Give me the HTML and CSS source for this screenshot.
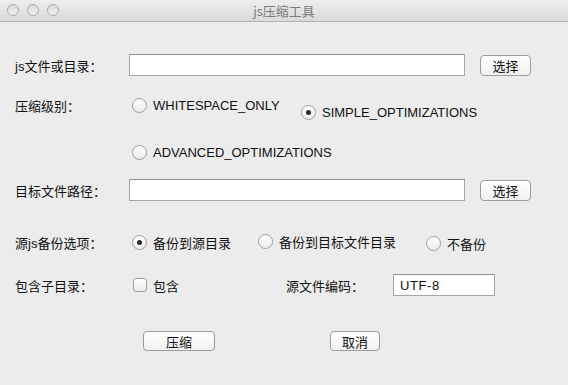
FILE: index.html
```html
<!DOCTYPE html>
<html>
<head>
<meta charset="utf-8">
<title>js压缩工具</title>
<link rel="stylesheet" href="styles.css">
</head>
<body>
<div class="window">
    <div class="titlebar">
        <div class="lights">
            <span class="light"></span>
            <span class="light"></span>
            <span class="light"></span>
        </div>
        <div class="title">js压缩工具</div>
    </div>

    <div class="form">
        <div class="row row-src">
            <label class="label">js文件或目录：</label>
            <input class="text path" type="text">
            <button class="btn pick">选择</button>
        </div>

        <div class="row row-level">
            <label class="label">压缩级别：</label>
            <div class="choices">
                <label class="opt opt-ws"><input class="radio" type="radio" name="level">WHITESPACE_ONLY</label>
                <label class="opt opt-simple"><input class="radio" type="radio" name="level" checked>SIMPLE_OPTIMIZATIONS</label>
            </div>
        </div>

        <div class="row row-adv">
            <span class="label"></span>
            <div class="choices">
                <label class="opt"><input class="radio" type="radio" name="level">ADVANCED_OPTIMIZATIONS</label>
            </div>
        </div>

        <div class="row row-dest">
            <label class="label">目标文件路径：</label>
            <input class="text path" type="text">
            <button class="btn pick">选择</button>
        </div>

        <div class="row row-backup">
            <label class="label">源js备份选项：</label>
            <div class="choices">
                <label class="opt opt-b1"><input class="radio" type="radio" name="backup" checked>备份到源目录</label>
                <label class="opt opt-b2"><input class="radio" type="radio" name="backup">备份到目标文件目录</label>
                <label class="opt opt-b3"><input class="radio" type="radio" name="backup">不备份</label>
            </div>
        </div>

        <div class="row row-misc">
            <label class="label">包含子目录：</label>
            <div class="choices">
                <label class="opt opt-sub"><input class="check" type="checkbox">包含</label>
                <label class="enc-label">源文件编码：</label>
                <input class="text enc" type="text" value="UTF-8">
            </div>
        </div>

        <div class="row row-actions">
            <button class="btn act-ok">压缩</button>
            <button class="btn act-cancel">取消</button>
        </div>
    </div>
</div>
</body>
</html>
```

FILE: styles.css
```css
body {
    margin: 0;
    background: #ececec;
    font-family: "Liberation Sans", "Noto Sans CJK SC", sans-serif;
    font-size: 13px;
    color: #111111;
}
.window {
    width: 568px;
    height: 385px;
    overflow: hidden;
}

/* title bar */
.titlebar {
    position: relative;
    height: 21px;
    border-bottom: 1px solid #b2b2b2;
    background: linear-gradient(#eeeeee, #dadada);
    display: flex;
    align-items: center;
    justify-content: center;
}
.lights {
    position: absolute;
    left: 7px;
    top: 4px;
    display: flex;
    gap: 8px;
}
.light {
    width: 10px;
    height: 10px;
    border-radius: 50%;
    border: 1px solid #a9a9a9;
    background: linear-gradient(#d8d8d8, #f2f2f2);
}
.title {
    color: #7c7c7c;
    font-size: 13px;
    font-family: "Noto Sans CJK SC", sans-serif;
}

/* form rows */
.form {
    padding-left: 15px;
}
.row {
    display: flex;
    align-items: center;
    height: 22px;
}
.row-src { margin-top: 32px; }
.row-level { margin-top: 18px; }
.row-adv { margin-top: 25px; }
.row-dest { margin-top: 16px; }
.row-backup { margin-top: 30px; }
.row-misc { margin-top: 21px; }
.row-actions { margin-top: 35px; height: 20px; }

.label {
    width: 114px;
    flex: none;
}
.text {
    box-sizing: border-box;
    height: 22px;
    margin: 0;
    padding: 0 5px;
    border: 1px solid #a6a6a6;
    border-top-color: #8e8e8e;
    background: #fff;
    font: inherit;
    color: #111;
    outline: none;
}
.path {
    width: 336px;
}
.btn {
    box-sizing: border-box;
    height: 21px;
    margin: 0;
    padding: 0;
    border: 1px solid #9c9c9c;
    border-radius: 4px;
    background: linear-gradient(#ffffff, #f1f1f1);
    font-family: "Noto Sans CJK SC", sans-serif;
    font-size: 13px;
    color: #111111;
}
.pick {
    width: 51px;
    margin-left: 15px;
}

/* radios / checkbox */
.choices {
    display: flex;
    align-items: center;
    padding-left: 3px;
}
.opt {
    display: flex;
    align-items: center;
    white-space: nowrap;
}
.radio,
.check {
    appearance: none;
    box-sizing: border-box;
    margin: 0 6px 0 0;
    flex: none;
    border: 1px solid #9d9d9d;
    background: linear-gradient(#ffffff, #ececec);
}
.radio {
    width: 15px;
    height: 15px;
    border-radius: 50%;
    display: grid;
    place-items: center;
}
.radio:checked::after {
    content: "";
    width: 5px;
    height: 5px;
    border-radius: 50%;
    background: #2a2a2a;
}
.check {
    width: 14px;
    height: 14px;
    border-radius: 3px;
    margin-left: 1px;
}
.opt-ws { width: 169px; }
.opt-simple { margin-top: 14px; }
.opt-b1 { width: 126px; }
.opt-b2 { width: 168px; margin-top: -2px; }
.opt-b3 { margin-top: 3px; }
.opt-sub { width: 154px; }
.enc-label {
    width: 107px;
    flex: none;
}
.enc {
    width: 102px;
    padding-left: 6px;
    letter-spacing: 0.6px;
}

/* bottom buttons */
.act-ok {
    width: 72px;
    height: 20px;
    margin-left: 128px;
}
.act-cancel {
    width: 50px;
    height: 20px;
    margin-left: 115px;
}
```
